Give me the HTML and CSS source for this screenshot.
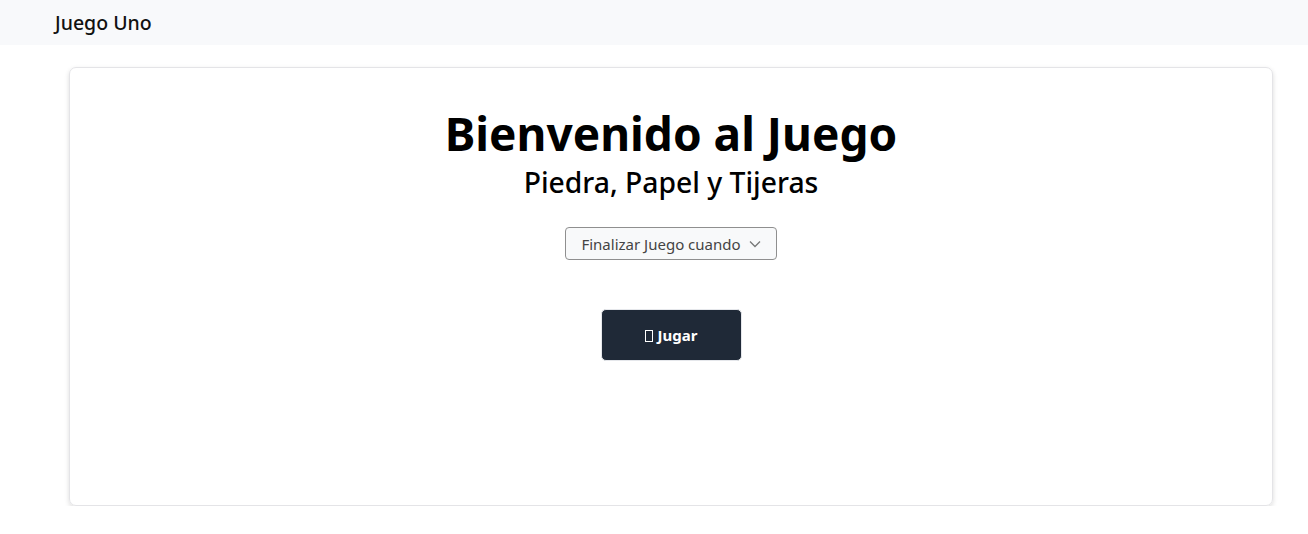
FILE: index.html
```html
<!DOCTYPE html>
<html lang="es">
<head>
<meta charset="utf-8">
<title>Juego Uno</title>
<link rel="stylesheet" href="styles.css">
</head>
<body>
<nav class="navbar">
  <span class="brand">Juego Uno</span>
</nav>
<main class="container">
  <section class="card">
    <h1 class="title">Bienvenido al Juego</h1>
    <h2 class="subtitle">Piedra, Papel y Tijeras</h2>
    <div class="select">
      <span>Finalizar Juego cuando</span>
      <svg class="chev" width="12" height="8" viewBox="0 0 12 8"><path d="M1 1.5 L6 6.5 L11 1.5" fill="none" stroke="#777" stroke-width="1.3"/></svg>
    </div>
    <button class="play"><span class="tofu"></span>Jugar</button>
  </section>
</main>
</body>
</html>
```

FILE: styles.css
```css
* { box-sizing: border-box; }
body {
  margin: 0;
  font-family: "Noto Sans", "Open Sans", sans-serif;
  color: #000;
  background: #fff;
}
.navbar {
  height: 45px;
  background: #f8f9fb;
  display: flex;
  align-items: center;
  padding-left: 55px;
}
.brand {
  font-size: 19.5px;
  font-weight: 500;
  color: #111;
}
.container {
  padding: 22px 35px 0 69px;
}
.card {
  height: 439px;
  border: 1px solid #e4e4e7;
  border-radius: 7px;
  box-shadow: 0 2px 5px rgba(0,0,0,0.14);
  display: flex;
  flex-direction: column;
  align-items: center;
  padding-top: 34px;
}
.title {
  margin: 0;
  font-size: 46px;
  font-weight: 700;
  line-height: 62px;
}
.subtitle {
  margin: 0;
  font-size: 28.3px;
  font-weight: 500;
  line-height: 36px;
}
.select {
  margin-top: 27px;
  height: 33px;
  width: 212px;
  border: 1px solid #8f8f8f;
  border-radius: 4px;
  background: #f8f9fa;
  display: flex;
  align-items: center;
  justify-content: center;
  gap: 8px;
  font-size: 15px;
  color: #444;
}
.chev { margin-top: 1px; }
.play {
  margin-top: 49px;
  width: 141px;
  height: 52px;
  background: #1f2937;
  color: #fff;
  border: 1px solid #e5e7eb;
  border-radius: 5px;
  font-family: inherit;
  font-size: 15px;
  font-weight: 700;
  display: flex;
  align-items: center;
  justify-content: center;
  gap: 5px;
}
.tofu {
  display: inline-block;
  width: 8px;
  height: 12px;
  border: 1.3px solid #fff;
  margin-top: 1px;
}
```
